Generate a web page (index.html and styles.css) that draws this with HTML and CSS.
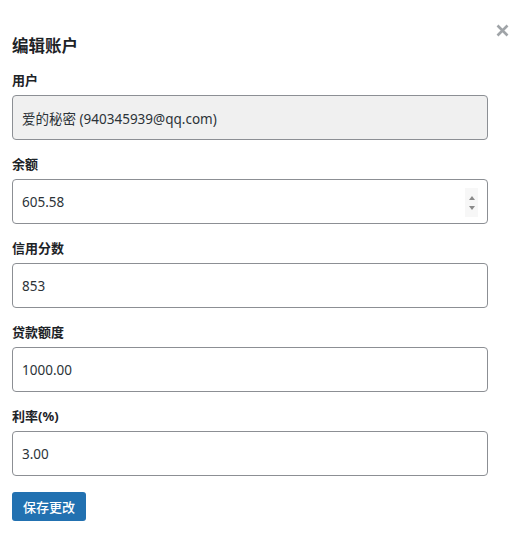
FILE: index.html
```html
<!DOCTYPE html>
<html lang="zh-CN">
<head>
<meta charset="utf-8">
<title>编辑账户</title>
<link rel="stylesheet" href="styles.css">
</head>
<body>
<div class="dialog">
  <button class="close" type="button" aria-label="关闭">
    <svg width="13" height="13" viewBox="0 0 13 13"><path d="M1.5 1.5 L11.5 11.5 M11.5 1.5 L1.5 11.5" stroke="#a0a4a8" stroke-width="2.6" stroke-linecap="butt"/></svg>
  </button>
  <h2 class="title">编辑账户</h2>
  <form class="form">
    <div class="field">
      <label class="label">用户</label>
      <div class="input disabled">爱的秘密 (940345939@qq.com)</div>
    </div>
    <div class="field">
      <label class="label">余额</label>
      <div class="input">605.58
        <span class="spin"><span class="up"></span><span class="down"></span></span>
      </div>
    </div>
    <div class="field">
      <label class="label">信用分数</label>
      <div class="input">853</div>
    </div>
    <div class="field">
      <label class="label">贷款额度</label>
      <div class="input">1000.00</div>
    </div>
    <div class="field">
      <label class="label">利率(%)</label>
      <div class="input">3.00</div>
    </div>
    <button class="save" type="button">保存更改</button>
  </form>
</div>
</body>
</html>
```
FILE: styles.css
```css
* { box-sizing: border-box; }
html, body { margin: 0; padding: 0; background: #fff; }
body {
  font-family: "Noto Sans", "Noto Sans CJK SC", sans-serif;
  color: #1d2327;
}
.dialog {
  position: relative;
  width: 530px;
  height: 542px;
  padding: 35px 42px 0 12px;
}
.close {
  position: absolute;
  top: 24px;
  left: 496px;
  width: 13px;
  height: 13px;
  padding: 0;
  border: 0;
  background: none;
  display: flex;
}
.title {
  margin: 0 0 14px;
  font-size: 16.5px;
  line-height: 22px;
  font-weight: 700;
}
.form { display: flex; flex-direction: column; }
.field { display: flex; flex-direction: column; margin-bottom: 15px; }
.label {
  font-size: 13px;
  line-height: 18px;
  font-weight: 700;
  margin-bottom: 6px;
  color: #1d2327;
}
.input {
  position: relative;
  height: 45px;
  border: 1px solid #8c8f94;
  border-radius: 4px;
  padding: 0 9px;
  display: flex;
  align-items: center;
  font-size: 13.5px;
  color: #2c3338;
  background: #fff;
}
.input.disabled { background: #f0f0f0; }
.spin {
  position: absolute;
  right: 9px;
  top: 8px;
  width: 13px;
  height: 29px;
  background: #f7f7f7;
  display: flex;
  flex-direction: column;
  align-items: center;
  justify-content: center;
  gap: 6px;
}
.up, .down { width: 0; height: 0; border-left: 3px solid transparent; border-right: 3px solid transparent; }
.up { border-bottom: 4px solid #8a8a8a; }
.down { border-top: 4px solid #8a8a8a; }
.save {
  align-self: flex-start;
  margin-top: 1px;
  height: 29px;
  padding: 0 11px;
  background: #2271b1;
  color: #fff;
  border: 0;
  border-radius: 3px;
  font-family: "Noto Sans", "Noto Sans CJK SC", sans-serif;
  font-size: 13px;
  font-weight: 500;
}
```
